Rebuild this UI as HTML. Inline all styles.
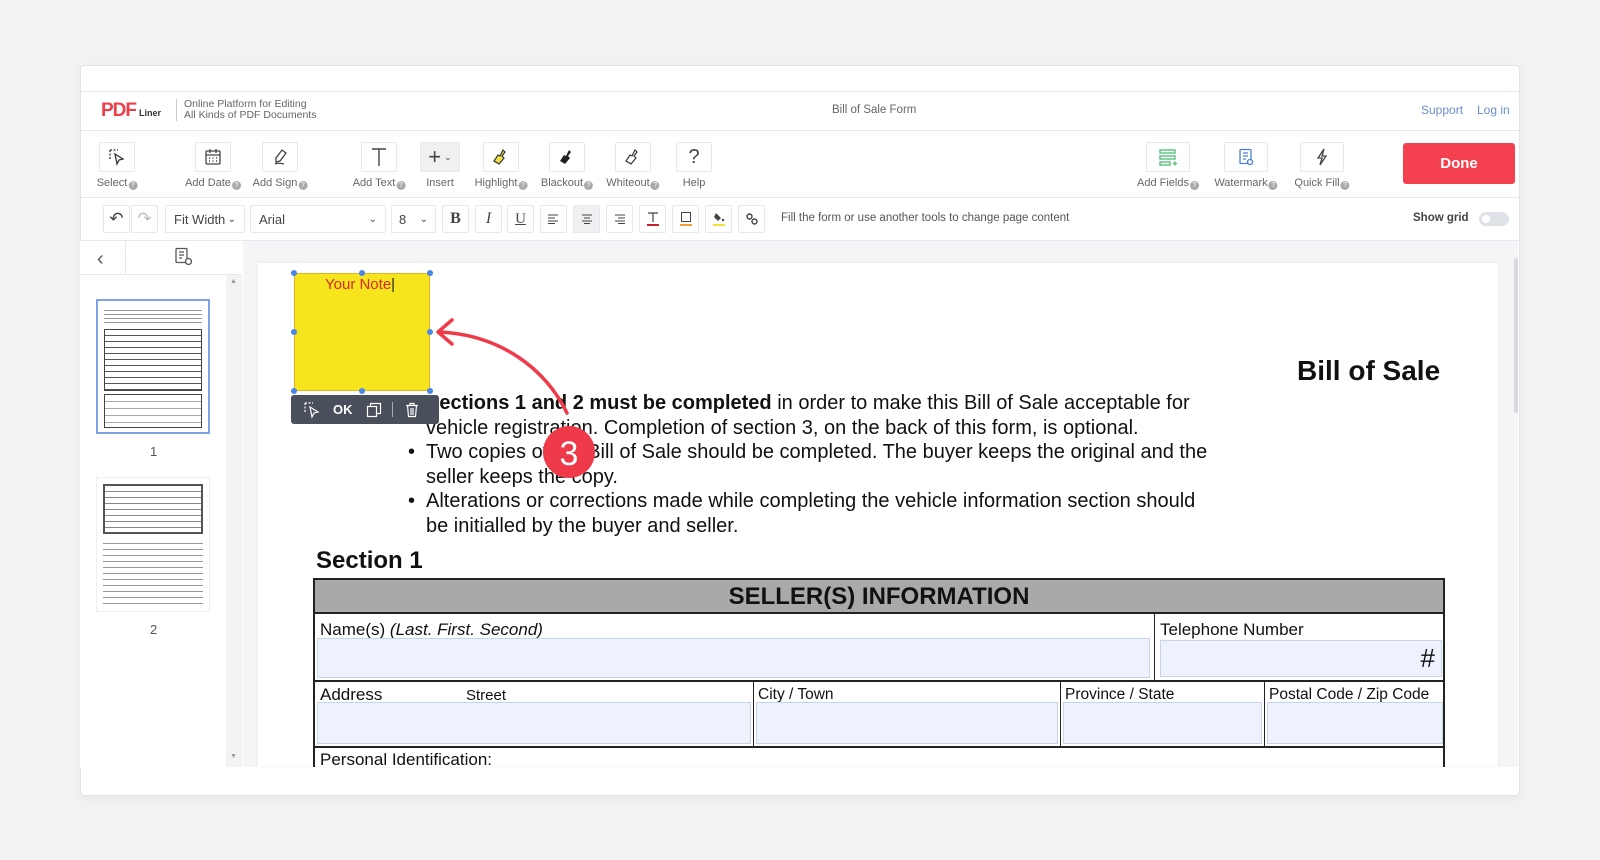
<!DOCTYPE html>
<html><head><meta charset="utf-8"><style>
*{box-sizing:border-box;margin:0;padding:0}
body{width:1600px;height:860px;background:#f1f2f4;position:relative;overflow:hidden;font-family:"Liberation Sans",sans-serif;color:#555}
.abs{position:absolute}
.card{left:80px;top:65px;width:1440px;height:731px;background:#fff;border:1px solid #e2e4e8;border-radius:4px;box-shadow:0 2px 8px rgba(0,0,0,.05)}
.hl{position:absolute;left:80px;width:1440px;height:1px;background:#e6e8eb}
.tb{position:absolute;top:142px;width:36px;height:30px;border:1px solid #e6e8eb;border-radius:2px;background:#fff;display:flex;align-items:center;justify-content:center}
.lbl{position:absolute;top:177px;font-size:11px;color:#666;white-space:nowrap;transform:translateX(-50%)}
.q{display:inline-block;width:9px;height:9px;border-radius:50%;background:#aaa;color:#fff;font-size:7px;line-height:9px;text-align:center;vertical-align:-1px;margin-left:1px}
.fb{position:absolute;top:205px;height:28px;border:1px solid #e6e8eb;border-radius:2px;background:#fff;display:flex;align-items:center;justify-content:center;font-size:13px;color:#444}
.doc{font-family:"Liberation Sans",Arial,sans-serif;color:#111}
.fld{position:absolute;background:#eef2fc;border:1px solid #c9d3e6}
.vl{position:absolute;width:1px;background:#222}
</style></head><body>
<div class="abs card"></div>
<div class="hl" style="top:91px"></div>
<div class="hl" style="top:130px"></div>
<div class="hl" style="top:197px"></div>
<div class="hl" style="top:240px"></div>

<!-- header -->
<div class="abs" style="left:101px;top:100px;font-weight:bold;font-size:19px;color:#ef3e4a;letter-spacing:-1px">PDF<span style="font-size:9px;color:#333;letter-spacing:0;margin-left:3px">Liner</span></div>
<div class="abs" style="left:176px;top:99px;width:1px;height:22px;background:#ccc"></div>
<div class="abs" style="left:184px;top:99px;font-size:10.5px;line-height:11px;color:#666">Online Platform for Editing<br>All Kinds of PDF Documents</div>
<div class="abs" style="left:832px;top:104px;font-size:11.5px;color:#666">Bill of Sale Form</div>
<div class="abs" style="left:1421px;top:103px;font-size:12px;color:#6b8fd0">Support</div>
<div class="abs" style="left:1477px;top:103px;font-size:12px;color:#6b8fd0">Log in</div>

<!-- tools -->
<div class="tb" style="left:99px"><svg width="18" height="18" viewBox="0 0 18 18" fill="none" stroke="#333" stroke-width="1.3"><path d="M2 2h8M2 2v9" stroke-dasharray="2 1.5"/><path d="M7 6l8 5-4 1-2 4z" fill="#fff"/></svg></div>
<div class="lbl" style="left:117px">Select<span class="q">?</span></div>
<div class="tb" style="left:195px"><svg width="18" height="18" viewBox="0 0 18 18" fill="none" stroke="#444" stroke-width="1.3"><rect x="2" y="3" width="14" height="13" rx="1"/><path d="M2 7h14M6 1v4M12 1v4"/><path d="M5 10h1M8.5 10h1M12 10h1M5 13h1M8.5 13h1M12 13h1" stroke-width="1.6"/></svg></div>
<div class="lbl" style="left:213px">Add Date<span class="q">?</span></div>
<div class="tb" style="left:262px"><svg width="18" height="18" viewBox="0 0 18 18" fill="none" stroke="#444" stroke-width="1.3"><path d="M11 2l4 3-6 8-4 1 0-4z"/><path d="M4 16c2-1 5-1 9 0"/></svg></div>
<div class="lbl" style="left:280px">Add Sign<span class="q">?</span></div>
<div class="tb" style="left:361px"><svg width="18" height="20" viewBox="0 0 18 20" fill="none" stroke="#444" stroke-width="1.4"><path d="M2 2h14M9 2v17"/></svg></div>
<div class="lbl" style="left:379px">Add Text<span class="q">?</span></div>
<div class="tb" style="left:420px;width:40px;background:#eef0f2"><span style="font-size:22px;color:#444;font-weight:300">+</span><span style="font-size:9px;color:#444;margin-left:3px">&#8964;</span></div>
<div class="lbl" style="left:440px">Insert</div>
<div class="tb" style="left:483px"><svg width="18" height="18" viewBox="0 0 18 18" fill="none" stroke="#333" stroke-width="1.2"><path d="M11 2l2 2-3 4 2 2-5 6-5-3 4-6 2 1z" fill="#f0e04a"/></svg></div>
<div class="lbl" style="left:501px">Highlight<span class="q">?</span></div>
<div class="tb" style="left:549px"><svg width="18" height="18" viewBox="0 0 18 18"><path d="M11 2l2 2-3 4 2 2-5 6-5-3 4-6 2 1z" fill="#222"/></svg></div>
<div class="lbl" style="left:567px">Blackout<span class="q">?</span></div>
<div class="tb" style="left:615px"><svg width="18" height="18" viewBox="0 0 18 18" fill="none" stroke="#333" stroke-width="1.2"><path d="M11 2l2 2-3 4 2 2-5 6-5-3 4-6 2 1z"/></svg></div>
<div class="lbl" style="left:633px">Whiteout<span class="q">?</span></div>
<div class="tb" style="left:676px"><span style="font-size:20px;color:#444">?</span></div>
<div class="lbl" style="left:694px">Help</div>

<div class="tb" style="left:1146px;width:44px"><svg width="20" height="18" viewBox="0 0 20 18" fill="none" stroke="#55c27a" stroke-width="1.4"><rect x="2" y="2" width="15" height="3"/><rect x="2" y="8" width="15" height="3"/><rect x="2" y="14" width="10" height="3"/><path d="M15 15.5h4M17 13.5v4"/></svg></div>
<div class="lbl" style="left:1168px">Add Fields<span class="q">?</span></div>
<div class="tb" style="left:1224px;width:44px"><svg width="18" height="18" viewBox="0 0 18 18" fill="none" stroke="#4a7fd4" stroke-width="1.3"><rect x="3" y="1.5" width="11" height="14" rx="1"/><path d="M6 5h5M6 8h5M6 11h3"/><circle cx="13" cy="14" r="2.5" fill="#fff"/></svg></div>
<div class="lbl" style="left:1246px">Watermark<span class="q">?</span></div>
<div class="tb" style="left:1300px;width:44px"><svg width="18" height="18" viewBox="0 0 18 18" fill="none" stroke="#444" stroke-width="1.3"><path d="M11 1L5 10h4l-2 7 6-9H9z"/></svg></div>
<div class="lbl" style="left:1322px">Quick Fill<span class="q">?</span></div>
<div class="abs" style="left:1403px;top:143px;width:112px;height:41px;background:#f5414f;border-radius:3px;color:#fff;font-weight:bold;font-size:15px;display:flex;align-items:center;justify-content:center">Done</div>

<!-- format bar -->
<div class="fb" style="left:103px;width:27px;font-size:17px">&#8630;</div>
<div class="fb" style="left:131px;width:27px;font-size:17px;color:#bbb">&#8631;</div>
<div class="fb" style="left:165px;width:80px;justify-content:space-between;padding:0 8px">Fit Width <span style="font-size:10px">&#8964;</span></div>
<div class="fb" style="left:250px;width:136px;justify-content:space-between;padding:0 8px">Arial <span style="font-size:10px">&#8964;</span></div>
<div class="fb" style="left:391px;width:45px;justify-content:space-between;padding:0 7px">8 <span style="font-size:10px">&#8964;</span></div>
<div class="fb" style="left:442px;width:27px;font-family:'Liberation Serif',serif;font-weight:bold;font-size:16px">B</div>
<div class="fb" style="left:475px;width:27px;font-family:'Liberation Serif',serif;font-style:italic;font-size:16px">I</div>
<div class="fb" style="left:507px;width:27px;font-family:'Liberation Serif',serif;text-decoration:underline;font-size:15px">U</div>
<div class="fb" style="left:540px;width:27px"><svg width="12" height="10"><path d="M0 1h10M0 4h7M0 7h10M0 9.5h7" stroke="#444"/></svg></div>
<div class="fb" style="left:573px;width:27px;background:#eef0f2"><svg width="12" height="10"><path d="M1 1h10M3 4h6M1 7h10M3 9.5h6" stroke="#444"/></svg></div>
<div class="fb" style="left:606px;width:27px"><svg width="12" height="10"><path d="M1 1h10M4 4h7M1 7h10M4 9.5h7" stroke="#444"/></svg></div>
<div class="fb" style="left:639px;width:27px"><svg width="14" height="16"><path d="M2 2h10M7 2v9" stroke="#444" stroke-width="1.2"/><path d="M1 14h12" stroke="#c8202f" stroke-width="2"/></svg></div>
<div class="fb" style="left:672px;width:27px"><svg width="14" height="16"><rect x="2.5" y="1.5" width="9" height="9" fill="none" stroke="#444"/><path d="M1 14h12" stroke="#f0a030" stroke-width="2"/></svg></div>
<div class="fb" style="left:705px;width:27px"><svg width="14" height="16"><path d="M4 2l5 5-3 3-4-4z" fill="#444"/><circle cx="11" cy="9" r="1.2" fill="#444"/><path d="M1 14h12" stroke="#f3e23a" stroke-width="2"/></svg></div>
<div class="fb" style="left:738px;width:27px"><svg width="14" height="14" fill="none" stroke="#444" stroke-width="1.4"><circle cx="4.5" cy="4.5" r="2.5"/><circle cx="9.5" cy="9.5" r="2.5"/></svg></div>
<div class="abs" style="left:781px;top:212px;font-size:11.5px;color:#555">Fill the form or use another tools to change page content</div>
<div class="abs" style="left:1413px;top:212px;font-size:11.5px;color:#444;font-weight:bold">Show grid</div>
<div class="abs" style="left:1479px;top:212px;width:30px;height:14px;border-radius:7px;background:#dfe2e7"><div style="position:absolute;left:3px;top:3px;width:8px;height:8px;border-radius:50%;background:#fff"></div></div>

<!-- sidebar -->
<div class="abs" style="left:80px;top:241px;width:162px;height:526px;background:#fff"></div>
<div class="abs" style="left:125px;top:241px;width:1px;height:34px;background:#e6e8eb"></div>
<div class="abs" style="left:80px;top:274px;width:162px;height:1px;background:#e6e8eb"></div>
<div class="abs" style="left:97px;top:248px;font-size:20px;color:#555">&#8249;</div>
<svg class="abs" style="left:174px;top:247px" width="20" height="20" viewBox="0 0 20 20" fill="none" stroke="#555" stroke-width="1.3"><rect x="2" y="1.5" width="11" height="14" rx="1"/><path d="M5 5h5M5 8h5M5 11h3"/><circle cx="14.5" cy="14.5" r="3" fill="#fff"/></svg>
<div class="abs" style="left:226px;top:275px;width:16px;height:492px;background:#f2f3f5"></div>
<div class="abs" style="left:230px;top:278px;font-size:7px;color:#999">&#9650;</div>
<div class="abs" style="left:230px;top:753px;font-size:7px;color:#999">&#9660;</div>
<div class="abs" style="left:96px;top:299px;width:114px;height:135px;border:2px solid #7ea3e6;background:#fff;padding:6px">
 <div style="height:18px;background:repeating-linear-gradient(#fff 0 3px,#999 3px 4px)"></div>
 <div style="height:62px;border:1px solid #444;margin-top:4px;background:repeating-linear-gradient(#fff 0 5px,#555 5px 6px)"></div>
 <div style="height:34px;border:1px solid #444;margin-top:3px;background:repeating-linear-gradient(#fff 0 6px,#aaa 6px 7px)"></div>
</div>
<div class="abs" style="left:150px;top:444px;font-size:13px;color:#555">1</div>
<div class="abs" style="left:96px;top:477px;width:114px;height:135px;border:1px solid #eee;background:#fff;padding:6px">
 <div style="height:50px;border:2px solid #555;background:repeating-linear-gradient(#fff 0 5px,#888 5px 6px)"></div>
 <div style="height:66px;margin-top:4px;background:repeating-linear-gradient(#fff 0 5px,#999 5px 6px)"></div>
</div>
<div class="abs" style="left:150px;top:622px;font-size:13px;color:#555">2</div>

<!-- content bg -->
<div class="abs" style="left:243px;top:241px;width:1275px;height:526px;background:#f4f5f7"></div>
<div class="abs" style="left:1514px;top:258px;width:4px;height:155px;background:#d8dade;border-radius:2px"></div>
<div class="abs doc" style="left:258px;top:263px;width:1240px;height:504px;background:#fff;box-shadow:0 0 4px rgba(0,0,0,.06);overflow:hidden">
 <div class="abs" style="left:1039px;top:92px;font-size:28px;font-weight:bold">Bill of Sale</div>
 <div class="abs" style="left:150px;top:128px;font-size:20px;line-height:24.5px">
  <div style="position:relative;padding-left:18px"><span style="position:absolute;left:0">&#8226;</span><b>Sections 1 and 2 must be completed</b> in order to make this Bill of Sale acceptable for<br>vehicle registration. Completion of section 3, on the back of this form, is optional.</div>
  <div style="position:relative;padding-left:18px"><span style="position:absolute;left:0">&#8226;</span>Two copies of the Bill of Sale should be completed. The buyer keeps the original and the<br>seller keeps the copy.</div>
  <div style="position:relative;padding-left:18px"><span style="position:absolute;left:0">&#8226;</span>Alterations or corrections made while completing the vehicle information section should<br>be initialled by the buyer and seller.</div>
 </div>
 <div class="abs" style="left:58px;top:284px;font-size:24px;font-weight:bold">Section 1</div>
 <div class="abs" style="left:55px;top:315px;width:1132px;height:240px;border:2px solid #222;border-bottom:none">
  <div style="height:34px;background:#a9a9a9;border-bottom:2px solid #222;text-align:center;font-weight:bold;font-size:24px;line-height:34px">SELLER(S) INFORMATION</div>
  <div class="abs" style="left:0;top:100px;width:100%;height:2px;background:#222"></div>
  <div class="abs" style="left:0;top:166px;width:100%;height:2px;background:#222"></div>
  <div class="vl" style="left:839px;top:34px;height:66px"></div>
  <div class="vl" style="left:438px;top:102px;height:64px"></div>
  <div class="vl" style="left:745px;top:102px;height:64px"></div>
  <div class="vl" style="left:949px;top:102px;height:64px"></div>
  <div class="abs" style="left:5px;top:40px;font-size:17px">Name(s) <i>(Last. First. Second)</i></div>
  <div class="fld" style="left:2px;top:58px;width:833px;height:40px"></div>
  <div class="abs" style="left:845px;top:40px;font-size:17px">Telephone Number</div>
  <div class="fld" style="left:845px;top:60px;width:282px;height:37px"><span style="position:absolute;right:6px;top:2px;font-size:26px">#</span></div>
  <div class="abs" style="left:5px;top:105px;font-size:17px">Address</div>
  <div class="abs" style="left:151px;top:107px;font-size:15px">Street</div>
  <div class="fld" style="left:2px;top:122px;width:434px;height:42px"></div>
  <div class="abs" style="left:443px;top:106px;font-size:15.5px">City / Town</div>
  <div class="fld" style="left:441px;top:122px;width:302px;height:42px"></div>
  <div class="abs" style="left:750px;top:106px;font-size:15.5px">Province / State</div>
  <div class="fld" style="left:748px;top:122px;width:199px;height:42px"></div>
  <div class="abs" style="left:954px;top:106px;font-size:15.5px">Postal Code / Zip Code</div>
  <div class="fld" style="left:952px;top:122px;width:176px;height:42px"></div>
  <div class="abs" style="left:5px;top:170px;font-size:17px">Personal Identification:</div>
 </div>
</div>

<!-- note -->
<div class="abs" style="left:294px;top:273px;width:136px;height:118px;background:#f6e41d;border:1px solid #e8b02a"></div>
<div class="abs" style="left:325px;top:276px;font-size:15px;color:#d62a1e">Your Note<span style="color:#222">|</span></div>
<div class="abs" style="left:291px;top:270px;width:6px;height:6px;border-radius:50%;background:#4a86e8"></div>
<div class="abs" style="left:359px;top:270px;width:6px;height:6px;border-radius:50%;background:#4a86e8"></div>
<div class="abs" style="left:427px;top:270px;width:6px;height:6px;border-radius:50%;background:#4a86e8"></div>
<div class="abs" style="left:291px;top:329px;width:6px;height:6px;border-radius:50%;background:#4a86e8"></div>
<div class="abs" style="left:427px;top:329px;width:6px;height:6px;border-radius:50%;background:#4a86e8"></div>
<div class="abs" style="left:291px;top:388px;width:6px;height:6px;border-radius:50%;background:#4a86e8"></div>
<div class="abs" style="left:359px;top:388px;width:6px;height:6px;border-radius:50%;background:#4a86e8"></div>
<div class="abs" style="left:427px;top:388px;width:6px;height:6px;border-radius:50%;background:#4a86e8"></div>
<div class="abs" style="left:291px;top:395px;width:148px;height:29px;background:#4a4f5c;border-radius:3px;color:#fff">
 <svg class="abs" style="left:12px;top:6px" width="18" height="18" viewBox="0 0 18 18" fill="none" stroke="#fff" stroke-width="1.2"><path d="M2 2h8M2 2v9" stroke-dasharray="2 1.5"/><path d="M7 6l8 5-4 1-2 4z"/></svg>
 <div class="abs" style="left:42px;top:7px;font-weight:bold;font-size:13px">OK</div>
 <svg class="abs" style="left:75px;top:7px" width="16" height="16" fill="none" stroke="#fff" stroke-width="1.2"><rect x="1.5" y="4.5" width="9" height="10"/><path d="M4.5 4.5V1.5h10v10h-4"/></svg>
 <div class="abs" style="left:101px;top:7px;width:1px;height:15px;background:#aaa"></div>
 <svg class="abs" style="left:114px;top:7px" width="14" height="16" fill="none" stroke="#fff" stroke-width="1.2"><path d="M1 3.5h12M5 3.5V1.5h4v2M2.5 3.5l1 11h7l1-11M6 6v7M8 6v7"/></svg>
</div>

<!-- annotation -->
<svg class="abs" style="left:0;top:0" width="1600" height="860"><path d="M567 413C545 368 500 335 440 332" fill="none" stroke="#ef3b49" stroke-width="3.5" stroke-linecap="round"/><path d="M452 320L438 332L452 344" fill="none" stroke="#ef3b49" stroke-width="3.5" stroke-linecap="round" stroke-linejoin="round"/><circle cx="569" cy="452" r="26" fill="#ef3b49"/><text x="569" y="465" font-family="Liberation Sans,sans-serif" font-size="34" fill="#fff" text-anchor="middle">3</text></svg>
</body></html>
